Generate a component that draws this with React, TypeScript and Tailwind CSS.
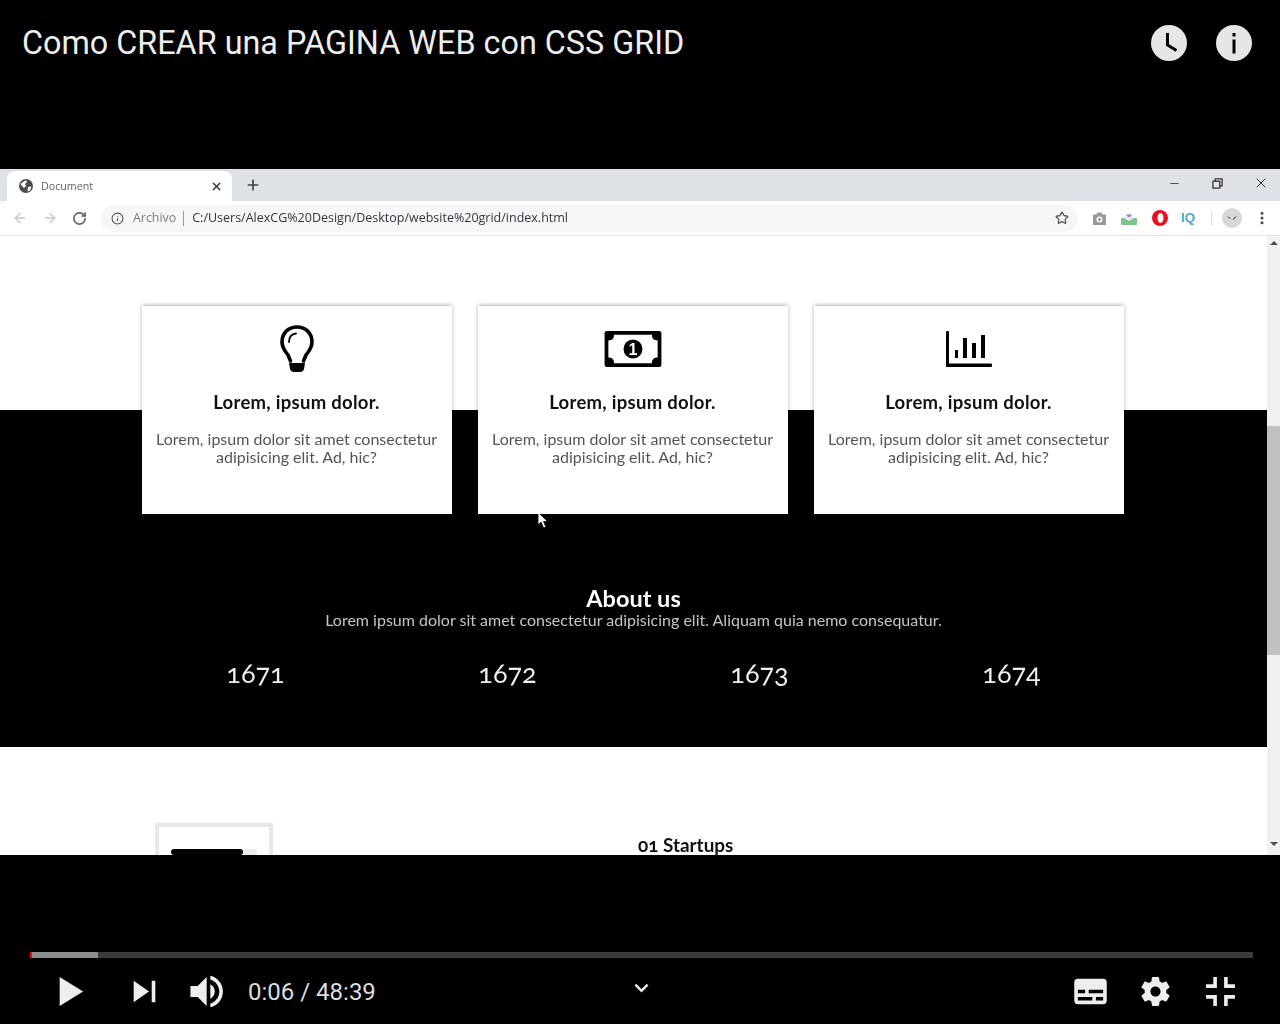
import React from 'react';
import { ArrowLeft, ArrowRight, RotateCw, Info, Star, Plus, X, Minus, EllipsisVertical } from 'lucide-react';

// Player icons, 36 unit grid
const GEAR =
  'm 23.94,18.78 c .03,-0.25 .05,-0.51 .05,-0.78 0,-0.27 -0.02,-0.52 -0.05,-0.78 l 1.68,-1.32 c .15,-0.12 .19,-0.33 .09,-0.51 l -1.6,-2.76 c -0.09,-0.17 -0.31,-0.24 -0.48,-0.17 l -1.99,.8 c -0.41,-0.32 -0.86,-0.58 -1.35,-0.78 l -0.30,-2.12 c -0.02,-0.19 -0.19,-0.33 -0.39,-0.33 l -3.2,0 c -0.2,0 -0.36,.14 -0.39,.33 l -0.30,2.12 c -0.48,.2 -0.93,.47 -1.35,.78 l -1.99,-0.8 c -0.18,-0.07 -0.39,0 -0.48,.17 l -1.6,2.76 c -0.10,.17 -0.05,.39 .09,.51 l 1.68,1.32 c -0.03,.25 -0.05,.52 -0.05,.78 0,.26 .02,.52 .05,.78 l -1.68,1.32 c -0.15,.12 -0.19,.33 -0.09,.51 l 1.6,2.76 c .09,.17 .31,.24 .48,.17 l 1.99,-0.8 c .41,.32 .86,.58 1.35,.78 l .30,2.12 c .02,.19 .19,.33 .39,.33 l 3.2,0 c .2,0 .36,-0.14 .39,-0.33 l .30,-2.12 c .48,-0.2 .93,-0.47 1.35,-0.78 l 1.99,.8 c .18,.07 .39,0 .48,-0.17 l 1.6,-2.76 c .09,-0.17 .05,-0.39 -0.09,-0.51 l -1.68,-1.32 0,0 z m -5.94,2.01 c -1.54,0 -2.8,-1.25 -2.8,-2.8 0,-1.54 1.25,-2.8 2.8,-2.8 1.54,0 2.8,1.25 2.8,2.8 0,1.54 -1.25,2.8 -2.8,2.8 l 0,0 z';
const VOLUME =
  'M8,21 L12,21 L17,26 L17,10 L12,15 L8,15 L8,21 Z M19,14 L19,22 C20.48,21.32 21.5,19.77 21.5,18 C21.5,16.26 20.48,14.74 19,14 Z M19,11.29 C21.89,12.15 24,14.83 24,18 C24,21.17 21.89,23.85 19,24.71 L19,26.77 C23.01,25.86 26,22.28 26,18 C26,13.72 23.01,10.14 19,9.23 L19,11.29 Z';
const SUBTITLES =
  'M11 11h14a2 2 0 0 1 2 2v10a2 2 0 0 1-2 2H11a2 2 0 0 1-2-2V13a2 2 0 0 1 2-2z M11 17v2h4v-2z M17 17v2h8v-2z M11 21v2h8v-2z M21 21v2h4v-2z';

const PlayerIcon = ({ d, className = '' }: { d: string; className?: string }) => (
  <svg viewBox="0 0 36 36" className={`w-[65px] h-[65px] shrink-0 fill-[#eeeeee] ${className}`}>
    <path d={d} fillRule="evenodd" />
  </svg>
);

const Bulb = () => (
  <svg viewBox="0 0 34 50" className="w-[34px] h-[50px]" fill="none" stroke="black">
    <path d="M10.5 36 L8 30 C5 26 2 23 2 17 C2 8 8.5 2 17 2 C25.5 2 32 8 32 17 C32 23 29 26 26 30 L23.5 36" strokeWidth="3.6" strokeLinecap="round" strokeLinejoin="round" />
    <path d="M9 17 C9 12 12 9 16 8.5" strokeWidth="1.8" strokeLinecap="round" />
    <path d="M9 38 H25 L24 44 C23.5 46 22 47 20 47 H14 C12 47 10.5 46 10 44 Z" fill="black" stroke="none" />
  </svg>
);

const Bill = () => (
  <svg viewBox="0 0 60 38" className="w-[58px] h-[36px] -mt-[2px]">
    <rect width="60" height="38" rx="2.5" fill="black" />
    <path d="M10 4 H50 C50 8 52 10 56 10 V28 C52 28 50 30 50 34 H10 C10 30 8 28 4 28 V10 C8 10 10 8 10 4 Z" fill="white" />
    <circle cx="30" cy="19" r="10" fill="black" />
    <text x="30" y="25" textAnchor="middle" fill="white" fontSize="17" fontWeight="700" fontFamily="Liberation Sans, sans-serif">1</text>
  </svg>
);

const BarsChart = () => (
  <svg viewBox="0 0 47 36" className="w-[47px] h-[36px] -mt-[2px]" fill="black">
    <rect x="1" y="0" width="3" height="36" rx="1" />
    <rect x="1" y="32.5" width="46" height="3.5" rx="1" />
    <rect x="10" y="19" width="3" height="8" />
    <rect x="18" y="7" width="4" height="20" />
    <rect x="27" y="12" width="4" height="15" />
    <rect x="36" y="4" width="4" height="23" />
  </svg>
);

const cards = [<Bulb key="a" />, <Bill key="b" />, <BarsChart key="c" />];

const years = ['1671', '1672', '1673', '1674'];

const BrowserBar = () => (
  <div className="shrink-0 font-['Open_Sans',sans-serif]">
    {/* Tab strip */}
    <div className="h-[32px] bg-[#dee1e6] flex items-end pl-[7px]">
      <div className="w-[225px] h-[30px] bg-white rounded-t-lg flex items-center pl-[12px] pr-[9px]">
        <svg viewBox="0 0 14 14" className="w-[14px] h-[14px]">
          <circle cx="7" cy="7" r="7" fill="#4a4d50" />
          <path d="M1.5 5 L4 3 L7 1.2 L8 3 L6 5 L7 7 L5 9 L3.5 7.5 Z M9 8 L12.5 7.5 L11 11.5 L8.5 12.5 Z" fill="white" />
        </svg>
        <span className="ml-[8px] text-[10.7px] text-[#5f6368]">Document</span>
        <X className="ml-auto w-[13px] h-[13px] text-[#333]" strokeWidth={2.5} />
      </div>
      <Plus className="ml-[13px] mb-[8px] w-[16px] h-[16px] text-[#444]" strokeWidth={2.5} />
      <div className="ml-auto flex items-center h-full pb-[4px] text-[#333]">
        <Minus className="w-[13px] h-[13px]" strokeWidth={1.5} />
        <svg viewBox="0 0 12 12" className="ml-[31px] w-[11px] h-[11px]" fill="none" stroke="currentColor" strokeWidth="1.4">
          <rect x="1" y="3.5" width="7.5" height="7.5" />
          <path d="M3.5 3.5 V1 H11 V8.5 H8.5" />
        </svg>
        <X className="ml-[30px] mr-[11px] w-[16px] h-[16px]" strokeWidth={1.5} />
      </div>
    </div>
    {/* Address bar */}
    <div className="h-[35px] bg-white border-b border-[#e2e2e2] flex items-center pl-[12px]">
      <ArrowLeft className="w-[16px] h-[16px] text-[#c4c7cb]" strokeWidth={2} />
      <ArrowRight className="ml-[14px] w-[16px] h-[16px] text-[#c4c7cb]" strokeWidth={2} />
      <RotateCw className="ml-[14px] w-[15px] h-[15px] text-[#5f6368]" strokeWidth={2.6} />
      <div className="ml-[14px] w-[977px] h-[27px] bg-[#f5f6f7] rounded-full flex items-center pl-[10px] pr-[9px]">
        <Info className="w-[13px] h-[13px] text-[#555]" strokeWidth={2} />
        <span className="ml-[9px] text-[12.4px] text-[#7a7d80]">Archivo</span>
        <span className="ml-[7px] w-px h-[15px] bg-[#9a9a9a]" />
        <span className="ml-[8px] text-[12.5px] text-[#33363a]">C:/Users/AlexCG%20Design/Desktop/website%20grid/index.html</span>
        <Star className="ml-auto w-[14px] h-[14px] text-[#555]" strokeWidth={2.2} />
      </div>
      <div className="ml-[14px] flex items-center">
        <svg viewBox="0 0 15 13" className="w-[15px] h-[13px]">
          <path d="M1 2.5 H4.5 L5.5 0.5 H9.5 L10.5 2.5 H14 V13 H1 Z" fill="#9a9a9a" />
          <circle cx="7.5" cy="7.5" r="3" fill="white" />
          <circle cx="7.5" cy="7.5" r="1.6" fill="#9a9a9a" />
        </svg>
        <svg viewBox="0 0 16 14" className="ml-[14px] w-[16px] h-[14px]">
          <rect x="0" y="7" width="16" height="7" rx="1" fill="#7fc28a" />
          <path d="M4 8 L4 4 C6 1 10 1 12 4 L12 8 L8 10 Z" fill="#e9e6f3" />
          <path d="M5.5 4.5 C7 3 9 3 10.5 4.5 L8 6.5 Z" fill="#8f7fc4" />
        </svg>
        <svg viewBox="0 0 16 16" className="ml-[15px] w-[16px] h-[16px]">
          <ellipse cx="8" cy="8" rx="8" ry="8" fill="#e8101c" />
          <ellipse cx="8.5" cy="8" rx="3" ry="5" fill="white" />
        </svg>
        <span className="ml-[13px] w-[16px] text-[13.5px] leading-none font-bold text-[#4ca3dc] font-['Liberation_Sans',sans-serif]">IQ</span>
        <span className="ml-[14px] w-px h-[14px] bg-[#dcdcdc]" />
        <span className="ml-[10px] w-[20px] h-[20px] rounded-full bg-[#d8d8d8] flex items-center justify-center">
          <svg viewBox="0 0 14 8" className="w-[12px] h-[7px]" fill="#333">
            <path d="M1 1 L5 3 L5 5 Z M13 1 L9 3 L8 6 Z" />
          </svg>
        </span>
        <EllipsisVertical className="ml-[10px] w-[20px] h-[16px] text-[#444]" strokeWidth={2.5} />
      </div>
    </div>
  </div>
);

const PageContent = () => (
  <div className="flex-1 min-w-0 overflow-hidden font-['Lato',sans-serif] [font-variant-numeric:oldstyle-nums]">
    <div className="h-[174px] bg-white pt-[70px]">
      <div className="flex justify-center gap-[26px] pr-[2px] relative z-10">
        {cards.map((icon, index) => (
          <div key={index} className="w-[310px] h-[208px] bg-white shadow-[0_-1px_4px_rgba(0,0,0,0.3)] flex flex-col items-center">
            <div className="h-[48px] mt-[19px] pt-[2px] flex items-center justify-center">{icon}</div>
            <h3 className="mt-[17px] text-[18.5px] leading-[24px] font-bold tracking-[0.28px] text-[#111]">Lorem, ipsum dolor.</h3>
            <p className="mt-[16px] w-[296px] text-center text-[16px] leading-[18px] text-[#555]">
              Lorem, ipsum dolor sit amet consectetur adipisicing elit. Ad, hic?
            </p>
          </div>
        ))}
      </div>
    </div>
    <div className="h-[337px] bg-black pt-[175px] text-center">
      <h2 className="text-[23.5px] leading-[26px] font-bold text-white">About us</h2>
      <p className="-mt-[1px] text-[16px] leading-[20px] text-[#c4c4c4]">
        Lorem ipsum dolor sit amet consectetur adipisicing elit. Aliquam quia nemo consequatur.
      </p>
      <div className="mt-[27px] mx-auto w-[1008px] grid grid-cols-4 text-[27px] leading-[32px] text-[#eeeeee]">
        {years.map((year) => (
          <span key={year}>{year}</span>
        ))}
      </div>
    </div>
    <div className="h-[108px] bg-white pt-[76px] flex">
      <div className="ml-[155px] w-[118px] h-[60px] border-[4px] border-[#e8e8e8] pt-[22px] pl-[12px] shrink-0">
        <div className="w-[86px] h-[6px] bg-[#ececec] rounded-full">
          <div className="w-[72px] h-[6px] bg-black rounded-full" />
        </div>
      </div>
      <span className="ml-[365px] mt-[10px] text-[18.9px] leading-[24px] font-bold text-[#111]">01 Startups</span>
    </div>
  </div>
);

const Scrollbar = () => (
  <div className="w-[13px] bg-[#f1f1f1] flex flex-col items-center shrink-0">
    <div className="mt-[5px] w-0 h-0 border-x-[4px] border-x-transparent border-b-[4px] border-b-[#505050]" />
    <div className="mt-[181px] w-full h-[229px] bg-[#c1c1c1]" />
    <div className="mt-[187px] w-0 h-0 border-x-[4px] border-x-transparent border-t-[4px] border-t-[#505050]" />
  </div>
);

export default function App() {
  return (
    <div className="w-[1280px] h-[1024px] bg-black overflow-hidden flex flex-col relative">
      {/* Player title */}
      <div className="h-[169px] shrink-0 flex items-start pt-[25px] pl-[22px] pr-[28px]">
        <h1 className="font-['Roboto',sans-serif] text-[32.35px] leading-[36px] text-[#eeeeee]">Como CREAR una PAGINA WEB con CSS GRID</h1>
        <div className="ml-auto flex gap-[29px]">
          <svg viewBox="0 0 36 36" className="w-[36px] h-[36px]">
            <circle cx="18" cy="18" r="18" fill="#e6e6e6" />
            <path d="M16.5 8 V20 L25.5 25.5" stroke="black" strokeWidth="3" fill="none" />
          </svg>
          <svg viewBox="0 0 36 36" className="w-[36px] h-[36px]">
            <circle cx="18" cy="18" r="18" fill="#e6e6e6" />
            <rect x="16.5" y="14.5" width="3" height="14" fill="black" />
            <rect x="16.5" y="8" width="3" height="3.5" fill="black" />
          </svg>
        </div>
      </div>

      {/* Video frame, soft like the recording */}
      <div className="h-[686px] shrink-0 flex flex-col overflow-hidden relative blur-[0.4px]">
        <BrowserBar />
        <div className="flex-1 min-h-0 flex">
          <PageContent />
          <Scrollbar />
        </div>
        {/* Recorded mouse pointer */}
        <svg viewBox="0 0 12 18" className="absolute left-[537px] top-[342px] w-[12px] h-[18px]">
          <path d="M1 1 V14 L4 11 L6.5 17 L9 16 L6.5 10.5 H10.5 Z" fill="white" stroke="black" strokeWidth="0.8" />
        </svg>
      </div>

      {/* Player controls */}
      <div className="flex-1 flex flex-col justify-end">
        <div className="mx-[30px] w-[1223px] h-[6px] bg-[#3a3a3a] flex">
          <div className="w-[2px] bg-[#ff0000]" />
          <div className="w-[66px] bg-[#8c8c8c]" />
        </div>
        <div className="h-[66px] flex items-center pl-[38px] mb-0">
          <PlayerIcon d="M12 26 L18.5 22 V14 L12 10 Z M18.5 22 L25 18 L18.5 14 Z" />
          <PlayerIcon d="M12 24 L20.5 18 L12 12 Z M22 12 V24 H24 V12 Z" className="ml-[9px]" />
          <PlayerIcon d={VOLUME} className="-ml-[1px]" />
          <span className="ml-[7px] pt-[2px] font-['Roboto',sans-serif] text-[24px] text-[#dddddd]">0:06 / 48:39</span>
          <svg viewBox="0 0 16 10" className="absolute left-[634px] top-[983px] w-[15px] h-[10px]" fill="none" stroke="#eeeeee" strokeWidth="2.6">
            <path d="M1.5 1.5 L8 8 L14.5 1.5" />
          </svg>
          <div className="ml-auto flex pr-[27px]">
            <PlayerIcon d={SUBTITLES} />
            <PlayerIcon d={GEAR} />
            <PlayerIcon d="M14 14h-4v2h6v-6h-2v4z M22 14v-4h-2v6h6v-2h-4z M20 26h2v-4h4v-2h-6v6z M10 22h4v4h2v-6h-6v2z" />
          </div>
        </div>
      </div>
    </div>
  );
}
